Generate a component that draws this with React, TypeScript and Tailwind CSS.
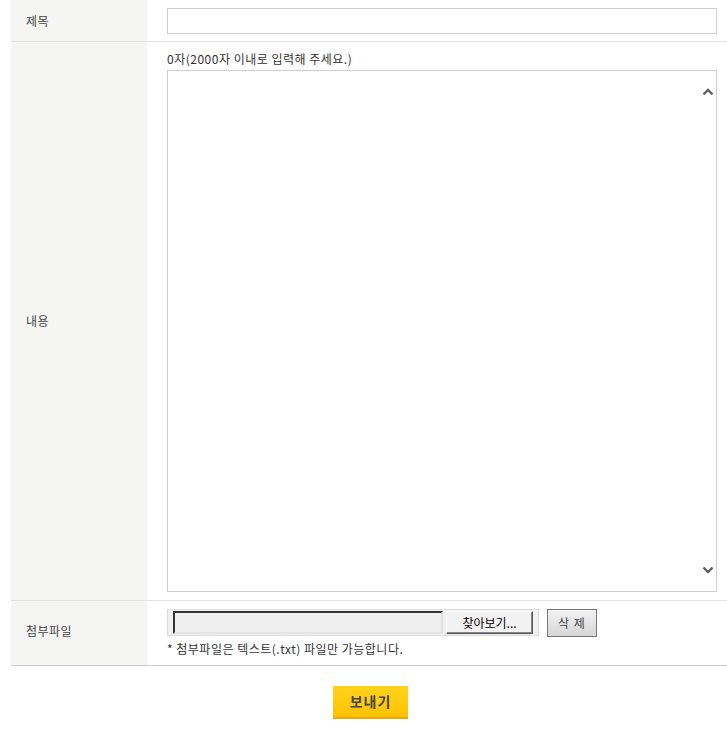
import { useState } from "react";

const font = { fontFamily: '"Noto Sans CJK KR", "Noto Sans", sans-serif' };

function Chevron({ up }: { up?: boolean }) {
  return (
    <svg width="12" height="8" viewBox="0 0 12 8" className="block">
      <path
        d={up ? "M1.5 6.5 L6 2 L10.5 6.5" : "M1.5 1.5 L6 6 L10.5 1.5"}
        fill="none"
        stroke="#606060"
        strokeWidth="2.4"
      />
    </svg>
  );
}

export default function App() {
  const [body, setBody] = useState("");

  return (
    <div className="w-[727px] h-[738px] overflow-hidden bg-white text-[#444]" style={font}>
      <div className="ml-[11px] w-[719px]">
        {/* 제목 */}
        <div className="flex border-b border-[#e3e3e3]">
          <div className="w-[136px] shrink-0 bg-[#f5f5f3] pl-[15px] flex items-center text-[12px] tracking-[0.5px]">제목</div>
          <div className="h-[41px] pl-[20px] flex items-center">
            <input className="w-[550px] h-[26px] border border-[#cfcfcf] bg-white outline-none px-2 text-[12px]" />
          </div>
        </div>

        {/* 내용 */}
        <div className="flex border-b border-[#e3e3e3]">
          <div className="w-[136px] shrink-0 bg-[#f5f5f3] pl-[15px] flex items-center text-[12px] tracking-[0.5px]">내용</div>
          <div className="pl-[20px] pt-[9px] pb-[8px]">
            <div className="text-[12px] leading-[15px] h-[19px] text-[#333] tracking-[0.5px]">
              {body.length}자(2000자 이내로 입력해 주세요.)
            </div>
            <div className="relative w-[550px] h-[522px]">
              <textarea
                value={body}
                onChange={(e) => setBody(e.target.value.slice(0, 2000))}
                className="block w-full h-full border border-[#cfcfcf] resize-none overflow-hidden outline-none p-2 text-[12px]"
              />
              <div className="absolute right-[3px] top-[18px]">
                <Chevron up />
              </div>
              <div className="absolute right-[3px] bottom-[18px]">
                <Chevron />
              </div>
            </div>
          </div>
        </div>

        {/* 첨부파일 */}
        <div className="flex border-b border-[#cccccc]">
          <div className="w-[136px] shrink-0 bg-[#f5f5f3] pl-[15px] pb-[4px] flex items-center text-[12px] tracking-[0.5px]">첨부파일</div>
          <div className="pl-[20px] pt-[8px] pb-[9px]">
            <div className="flex items-start gap-[8px]">
              <div className="w-[372px] h-[27px] bg-[#f0f0f0] border border-[#dcdcdc] flex items-center pl-[5px] gap-[3px]">
                <div className="w-[270px] h-[23px] bg-[#efefef] border-2 border-t-[#333] border-l-[#333] border-b-[#e3e3e3] border-r-[#e3e3e3]" />
                <button className="w-[87px] h-[23px] bg-[#f2f2f2] border border-[#555] border-t-[#fff] border-l-[#fff] shadow-[inset_-1px_-1px_0_#888] text-[12px] text-black leading-none">
                  찾아보기...
                </button>
              </div>
              <button className="w-[50px] h-[28px] border border-[#777] bg-gradient-to-b from-[#f3f3f3] to-[#d6d6d6] text-[12px] text-[#444] leading-none tracking-[1px]">
                삭 제
              </button>
            </div>
            <div className="mt-[4px] text-[12px] leading-[15px] text-[#333] tracking-[0.5px]">
              * 첨부파일은 텍스트(.txt) 파일만 가능합니다.
            </div>
          </div>
        </div>

        {/* 보내기 */}
        <div className="flex justify-center pt-[20px]">
          <button className="w-[75px] h-[33px] bg-gradient-to-b from-[#ffd41c] to-[#ffc200] border-b-2 border-[#f4a600] text-[14px] font-bold text-[#444] tracking-[1px]">
            보내기
          </button>
        </div>
      </div>
    </div>
  );
}
